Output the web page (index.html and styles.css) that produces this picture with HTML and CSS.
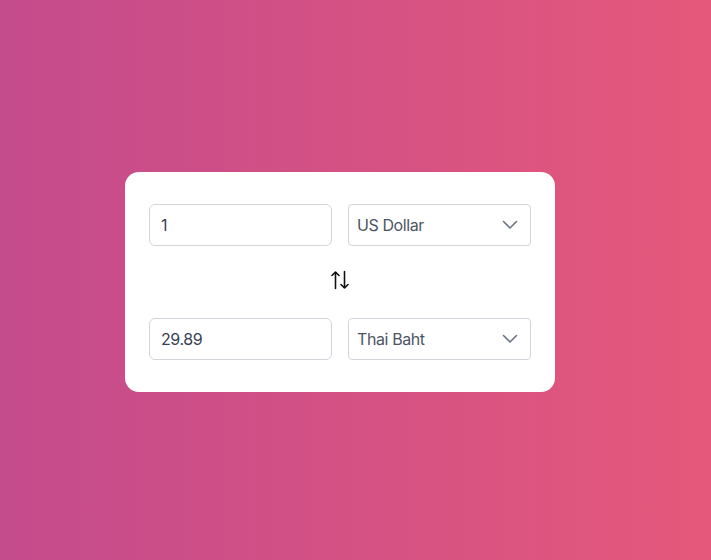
FILE: index.html
```html
<!DOCTYPE html>
<html>
<head>
<meta charset="utf-8">
<link rel="stylesheet" href="styles.css">
</head>
<body>
<main class="page">
  <section class="card">
    <div class="row">
      <div class="field">1</div>
      <div class="select"><span>US Dollar</span>
        <svg class="chev" width="16" height="10" viewBox="0 0 16 10"><path d="M1.5 1.5 L8 8 L14.5 1.5" fill="none" stroke="#6b7280" stroke-width="1.6" stroke-linecap="round" stroke-linejoin="round"/></svg>
      </div>
    </div>
    <div class="swap">
      <svg width="18" height="20" viewBox="0 0 18 20"><path d="M4.5 18.5 V2 M1 5.5 L4.5 2 L8 5.5 M13.5 1.5 V18 M10 14.5 L13.5 18 L17 14.5" fill="none" stroke="#111" stroke-width="1.6" stroke-linecap="round" stroke-linejoin="round"/></svg>
    </div>
    <div class="row">
      <div class="field">29.89</div>
      <div class="select"><span>Thai Baht</span>
        <svg class="chev" width="16" height="10" viewBox="0 0 16 10"><path d="M1.5 1.5 L8 8 L14.5 1.5" fill="none" stroke="#6b7280" stroke-width="1.6" stroke-linecap="round" stroke-linejoin="round"/></svg>
      </div>
    </div>
  </section>
</main>
</body>
</html>
```
FILE: styles.css
```css
html, body { margin: 0; padding: 0; }
body {
  font-family: Inter, "Noto Sans", sans-serif;
  background: linear-gradient(to right, #c44b8d, #e5587b);
  height: 560px;
  overflow: hidden;
}
.page {
  height: 560px;
  display: flex;
  align-items: flex-start;
  justify-content: center;
  padding-top: 172px;
  box-sizing: border-box;
  padding-right: 31px;
}
.card {
  width: 430px;
  box-sizing: border-box;
  background: #fff;
  border-radius: 14px;
  padding: 32px 24px;
}
.row {
  display: grid;
  grid-template-columns: 1fr 1fr;
  gap: 16px;
}
.field, .select {
  height: 42px;
  box-sizing: border-box;
  border: 1px solid #d1d5db;
  display: flex;
  align-items: center;
  font-size: 16px;
  letter-spacing: -0.4px;
}
.field {
  border-radius: 6px;
  padding-left: 11px;
  color: #374151;
}
.select {
  border-radius: 4px;
  padding-left: 8px;
  padding-right: 12px;
  color: #4b5563;
  justify-content: space-between;
}
.swap {
  height: 72px;
  display: flex;
  align-items: center;
  justify-content: center;
  padding-bottom: 4px;
  box-sizing: border-box;
}
```
